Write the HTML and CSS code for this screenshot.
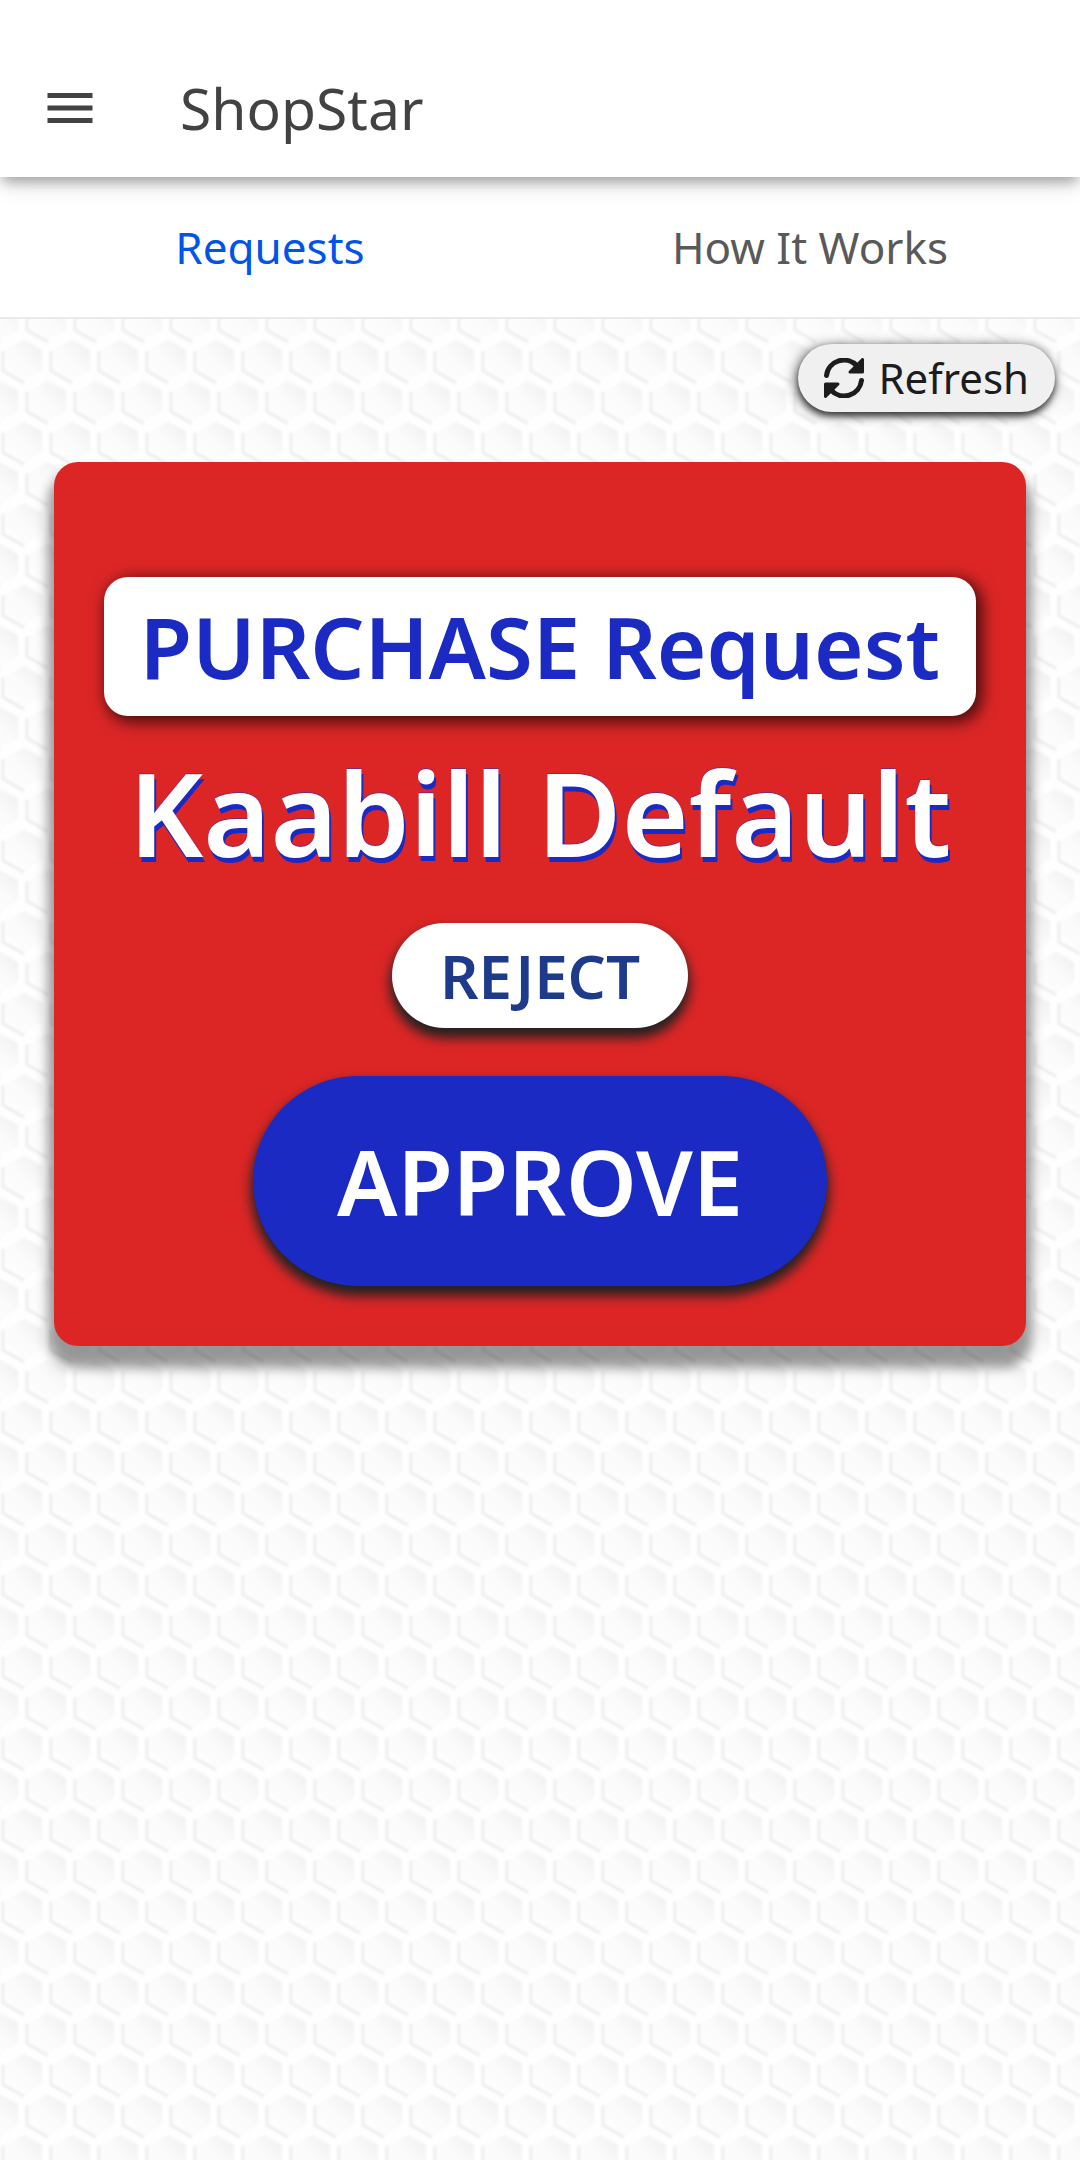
FILE: index.html
```html
<!DOCTYPE html>
<html lang="en">
<head>
	<meta charset="utf-8">
	<meta name="viewport" content="width=device-width, initial-scale=1">
	<title>ShopStar</title>
	<link rel="stylesheet" href="styles.css">
</head>

<body>
	<!-- Toolbar -->
	<header class="toolbar">
		<button type="button" class="menu-button" aria-label="Menu">
			<svg class="menu-icon" viewBox="0 0 24 24"><path d="M3 18h18v-2H3v2zm0-5h18v-2H3v2zm0-7v2h18V6H3z"/></svg>
		</button>
		<h1 class="title">ShopStar</h1>
	</header>

	<!-- Tabs -->
	<nav class="tabs">
		<a href="#requests" class="tab active">Requests</a>
		<a href="#how" class="tab">How It Works</a>
	</nav>

	<main class="content" id="requests">
		<button type="button" class="refresh">
			<svg class="refresh-icon" viewBox="0 0 40 40">
				<path class="arc" d="M2.500 17.500A17.500 17.500 0 0 1 33 8M37.500 22.500A17.500 17.500 0 0 1 7 32"/>
				<path class="head" d="M38.500 1.500V14H26zM1.500 38.500V26H14z"/>
			</svg>
			Refresh
		</button>

		<!-- Request card -->
		<section class="card">
			<h2 class="kind">PURCHASE Request</h2>
			<p class="shop">Kaabill Default</p>
			<button type="button" class="reject">REJECT</button>
			<button type="button" class="approve">APPROVE</button>
		</section>
	</main>
</body>
</html>
```
FILE: styles.css
```css
*{
	box-sizing: border-box;
}

body{
	margin: 0;
	min-height: 100vh;
	display: flex;
	flex-direction: column;
	background-color: white;
	font-family: "Noto Sans", "Open Sans", sans-serif;
}

button{
	border: 0;
	font-family: inherit;
	cursor: pointer;
}

/* ---------- Toolbar ---------- */
.toolbar{
	position: relative;
	z-index: 1;
	display: flex;
	align-items: center;
	gap: 80px;
	height: 177px;
	padding: 38px 40px 0;
	background-color: white;
	box-shadow: 0 8px 12px -3px rgba(0,0,0,0.3), 0 4px 26px rgba(0,0,0,0.14);
}

.menu-button{
	display: flex;
	padding: 0;
	background: none;
}

.menu-icon{
	width: 60px;
	height: 60px;
	fill: #424242;
}

.title{
	margin: 0;
	font-size: 57px;
	font-weight: 400;
	line-height: 80px;
	color: #424242;
}

/* ---------- Tabs ---------- */
.tabs{
	display: flex;
	height: 142px;
	background-color: white;
	border-bottom: 2px solid #eaeaea;
}

.tab{
	flex: 1;
	display: flex;
	align-items: center;
	justify-content: center;
	font-size: 44px;
	color: #595959;
	text-decoration: none;
}

.tab.active{
	color: #0054e9;
}

/* ---------- Page with the honeycomb background ---------- */
.content{
	flex: 1;
	display: flex;
	flex-direction: column;
	padding: 25px 54px;
	background: url("data:image/svg+xml,%3Csvg xmlns='http://www.w3.org/2000/svg' xmlns:xlink='http://www.w3.org/1999/xlink' width='240' height='408'%3E%3Cdefs%3E%3ClinearGradient id='g' x1='.9' y1='.1' x2='.3' y2='.8'%3E%3Cstop offset='0' stop-color='%23f1f1f1'/%3E%3Cstop offset='.6' stop-color='%23fbfbfb'/%3E%3Cstop offset='1' stop-color='%23fdfdfd'/%3E%3C/linearGradient%3E%3Cfilter id='b' x='-.3' y='-.3' width='1.6' height='1.6'%3E%3CfeGaussianBlur stdDeviation='1.3'/%3E%3C/filter%3E%3Cg id='h'%3E%3Cpath d='M0-21L18-11V10L0 21L-19 10V-11z' fill='url(%23g)' filter='url(%23b)'/%3E%3Cpath d='M-21-10V10L0 22' fill='none' stroke='%23eeeeee' stroke-width='3' filter='url(%23b)'/%3E%3C/g%3E%3Cpattern id='p' width='48' height='81.6' patternUnits='userSpaceOnUse'%3E%3Cuse xlink:href='%23h' x='0' y='1'/%3E%3Cuse xlink:href='%23h' x='48' y='1'/%3E%3Cuse xlink:href='%23h' x='24' y='41.8'/%3E%3Cuse xlink:href='%23h' x='0' y='82.6'/%3E%3Cuse xlink:href='%23h' x='48' y='82.6'/%3E%3C/pattern%3E%3C/defs%3E%3Crect width='240' height='408' fill='%23fefefe'/%3E%3Crect width='240' height='408' fill='url(%23p)'/%3E%3C/svg%3E");
}

.refresh{
	align-self: flex-end;
	display: flex;
	align-items: center;
	gap: 14px;
	height: 68px;
	margin-right: -29px;
	padding: 0 26px;
	border-radius: 34px;
	background-color: #f0f0f0;
	box-shadow: 0 4px 6px rgba(0,0,0,0.6), -2px 2px 14px rgba(0,0,0,0.6);
	font-size: 42px;
	line-height: 60px;
	color: #1c1c1c;
}

.refresh-icon{
	width: 40px;
	height: 40px;
}

.refresh-icon .arc{
	fill: none;
	stroke: #1c1c1c;
	stroke-width: 5;
	stroke-linecap: round;
}

.refresh-icon .head{
	fill: #1c1c1c;
	stroke: #1c1c1c;
	stroke-width: 3;
	stroke-linejoin: round;
}

/* ---------- Request card ---------- */
.card{
	display: flex;
	flex-direction: column;
	align-items: center;
	margin-top: 50px;
	padding: 115px 50px 60px;
	border-radius: 24px;
	background-color: #dc2626;
	box-shadow: 0 16px 12px 6px rgba(0,0,0,0.4);
}

.kind{
	align-self: stretch;
	margin: 0;
	padding: 20px 0;
	border-radius: 24px;
	background-color: white;
	box-shadow: 4px 4px 16px 2px rgba(0,0,0,0.7);
	font-size: 85px;
	font-weight: 600;
	line-height: 99px;
	text-align: center;
	white-space: nowrap;
	color: #1a2ac3;
}

.shop{
	margin: 20px 0 33px;
	font-size: 115px;
	font-weight: 600;
	line-height: 154px;
	white-space: nowrap;
	color: white;
	text-shadow: 2px 5px 0 #1a2ac3, 0 -1px 0 #7a2a78;
}

.reject,
.approve{
	font-weight: 600;
	box-shadow: 0 8px 12px 2px #222222;
}

.reject{
	height: 105px;
	padding: 0 48px;
	border-radius: 53px;
	background-color: white;
	font-size: 60px;
	color: #1e3a8a;
}

.approve{
	height: 210px;
	margin-top: 48px;
	padding: 0 84px;
	border-radius: 105px;
	background-color: #1a2ac3;
	font-size: 90px;
	color: white;
}
```
